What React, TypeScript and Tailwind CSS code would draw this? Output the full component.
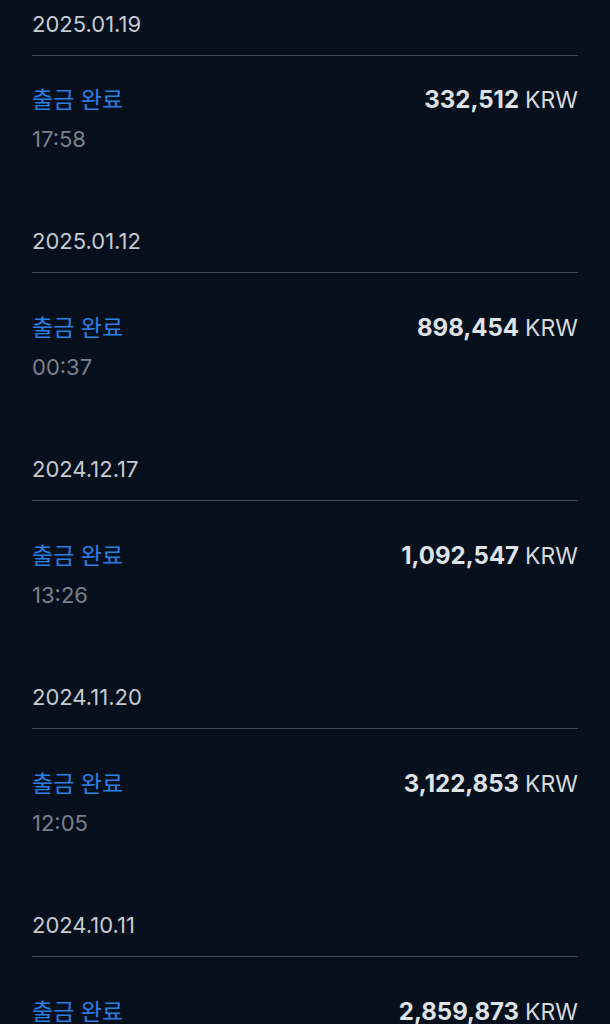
const records = [
  { date: "2025.01.19", status: "출금 완료", time: "17:58", amount: "332,512" },
  { date: "2025.01.12", status: "출금 완료", time: "00:37", amount: "898,454" },
  { date: "2024.12.17", status: "출금 완료", time: "13:26", amount: "1,092,547" },
  { date: "2024.11.20", status: "출금 완료", time: "12:05", amount: "3,122,853" },
  { date: "2024.10.11", status: "출금 완료", time: "15:42", amount: "2,859,873" },
];

export default function App() {
  return (
    <div
      className="min-h-screen h-[1024px] overflow-hidden bg-[#06101d] px-8 pt-[10px]"
      style={{ fontFamily: '"Inter", "Noto Sans CJK KR", sans-serif' }}
    >
      {records.map((r, i) => (
        <section key={r.date} className="pb-[74px]">
          <div className="h-7 text-[22px] leading-7 text-[#c6cad0]">{r.date}</div>
          <div className="mt-[17px] h-px bg-[#3d4654]" />
          <div className={i === 0 ? "pt-[30px]" : "pt-[41px]"}>
            <div className="flex items-center justify-between">
              <span className="h-7 text-[23px] leading-7 text-[#2b7fe3]">{r.status}</span>
              <span className="h-7 text-[23px] leading-7 text-[#dfe2e6] whitespace-nowrap">
                <span className="font-bold text-[24px]">{r.amount}</span>
                <span className="ml-[6px] text-[#d6d9de]">KRW</span>
              </span>
            </div>
            <div className="mt-[11px] h-7 text-[22px] leading-7 text-[#7a8089]">{r.time}</div>
          </div>
        </section>
      ))}
    </div>
  );
}
